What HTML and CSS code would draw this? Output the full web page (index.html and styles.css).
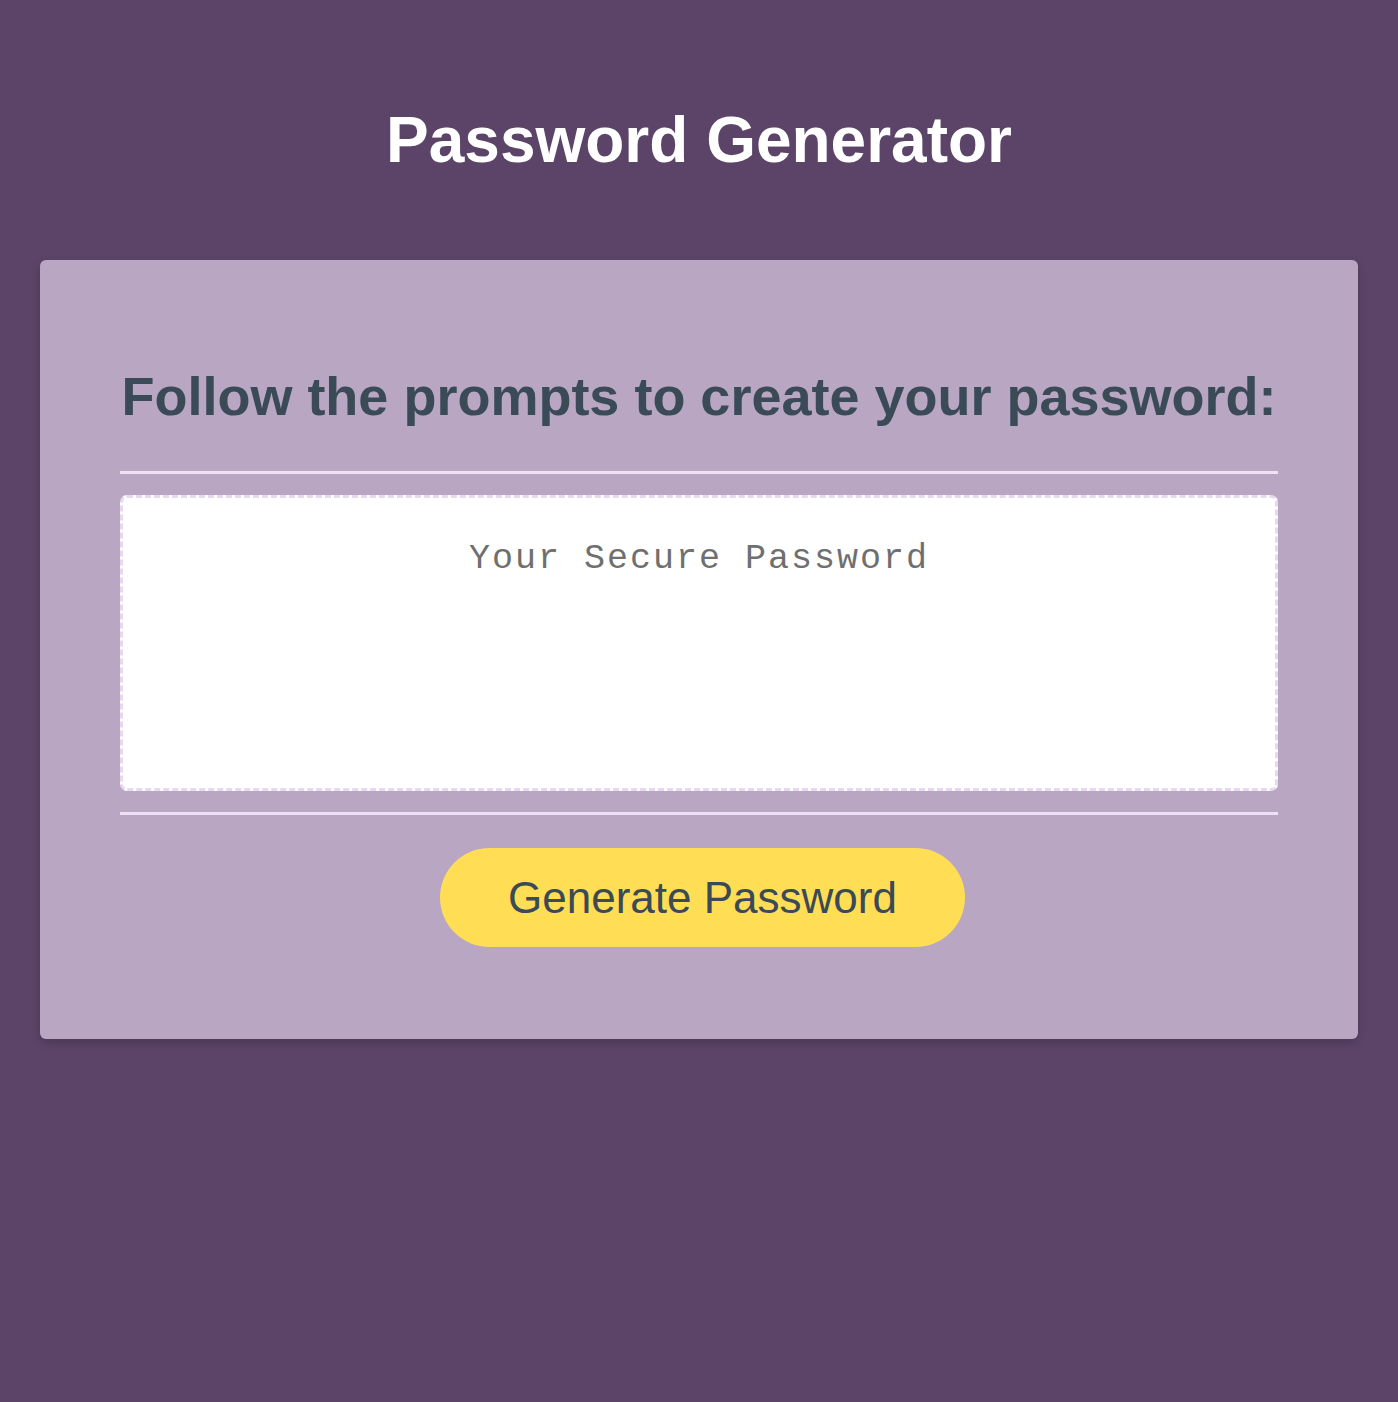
FILE: index.html
```html
<!DOCTYPE html>
<html lang="en">
<head>
<meta charset="utf-8">
<title>Password Generator</title>
<link rel="stylesheet" href="styles.css">
</head>
<body>
<div class="wrapper">
  <header class="header">
    <h1 class="title">Password Generator</h1>
  </header>
  <div class="card">
    <div class="card-header">
      <h2 class="prompt">Follow the prompts to create your password:</h2>
    </div>
    <div class="card-body">
      <textarea class="password" readonly placeholder="Your Secure Password" aria-label="Generated Password"></textarea>
    </div>
    <div class="card-footer">
      <button class="btn" type="button">Generate Password</button>
    </div>
  </div>
</div>
</body>
</html>
```
FILE: styles.css
```css
* { box-sizing: border-box; }

html, body {
  margin: 0;
  padding: 0;
  height: 100%;
}

body {
  background: #5c4468;
  font-family: "Liberation Sans", Arial, Helvetica, sans-serif;
}

.wrapper {
  padding: 0 40px;
}

.header {
  padding-top: 102px;
  padding-bottom: 82px;
  text-align: center;
}

.title {
  margin: 0;
  color: #ffffff;
  font-size: 64px;
  font-weight: 700;
  line-height: 76px;
}

.card {
  background: #b9a6c3;
  border-radius: 6px;
  box-shadow: 0 4px 10px rgba(0, 0, 0, 0.18);
  padding: 105px 80px 92px;
}

.card-header {
  border-bottom: 3px solid #eee0f5;
  padding-bottom: 44px;
  text-align: center;
}

.prompt {
  margin: 0;
  color: #3a4a56;
  font-size: 54px;
  font-weight: 700;
  line-height: 62px;
}

.card-body {
  padding: 21px 0;
}

.password {
  display: block;
  width: 100%;
  height: 296px;
  resize: none;
  border: 3px dashed #e6d8ee;
  border-radius: 7px;
  background: #ffffff;
  padding: 41px 10px 10px;
  text-align: center;
  font-family: "Liberation Mono", "Courier New", monospace;
  font-size: 35px;
  letter-spacing: 2px;
  color: #3a4a56;
  outline: none;
}

.password::placeholder {
  color: #6f6f6f;
  opacity: 1;
}

.card-footer {
  border-top: 3px solid #eee0f5;
  padding-top: 33px;
  text-align: center;
}

.btn {
  display: inline-block;
  margin-left: 7px;
  border: none;
  background: #ffdd55;
  color: #3a4a56;
  border-radius: 50px;
  font-family: "Liberation Sans", Arial, Helvetica, sans-serif;
  font-size: 44px;
  line-height: 51px;
  padding: 24px 68px;
  cursor: pointer;
}
```
